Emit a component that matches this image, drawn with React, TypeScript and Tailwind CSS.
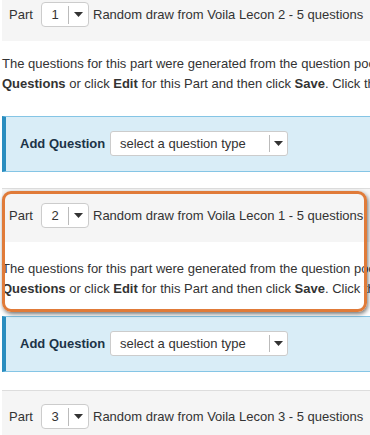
const Caret = () => (
  <svg width="9" height="5" viewBox="0 0 9 5" className="block">
    <path d="M0 0 H9 L4.5 5 Z" fill="#333" />
  </svg>
);

const PartSelect = ({ value }: { value: string }) => (
  <div className="flex h-[25px] w-[48px] shrink-0 items-center rounded-[4px] border border-[#cccccc] bg-white">
    <span className="w-[26px] text-center text-[13px] text-[#333]">{value}</span>
    <span className="h-[18px] w-px bg-[#bbbbbb]" />
    <span className="flex flex-1 justify-center">
      <Caret />
    </span>
  </div>
);

const PartHeader = ({
  num,
  lesson,
  className,
}: {
  num: string;
  lesson: string;
  className: string;
}) => (
  <div className={`flex items-center bg-[#f5f5f5] pl-[7px] pb-[14px] ${className}`}>
    <span className="w-[32px] text-[13px] text-[#333]">Part</span>
    <PartSelect value={num} />
    <span className="ml-[4px] whitespace-nowrap text-[13px] text-[#333]">
      Random draw from Voila Lecon {lesson} - 5 questions
    </span>
  </div>
);

const PartText = ({ className }: { className: string }) => (
  <div className={`text-[13px] leading-[20px] text-[#333] ${className}`}>
    <p className="whitespace-nowrap">
      The questions for this part were generated from the question pool. To change which questions are used, click Regenerate
    </p>
    <p className="whitespace-nowrap">
      <b>Questions</b> or click <b>Edit</b> for this Part and then click <b>Save</b>. Click the question to edit it.
    </p>
  </div>
);

const AddQuestion = ({ className }: { className: string }) => (
  <div
    className={`flex items-center border-y border-[#85c5e5] border-l-4 border-l-[#2a8dbf] bg-[#d9edf7] pl-[14px] pt-[14px] pb-[15px] ${className}`}
  >
    <span className="w-[90px] text-[13px] font-bold text-[#1c3347]">Add Question</span>
    <div className="flex h-[25px] w-[178px] items-center rounded-[3px] border border-[#cccccc] bg-white">
      <span className="flex-1 pl-[9px] text-[13px] text-[#333]">select a question type</span>
      <span className="h-[17px] w-px bg-[#bbbbbb]" />
      <span className="flex w-[17px] justify-center">
        <Caret />
      </span>
    </div>
  </div>
);

export default function App() {
  return (
    <div
      className="h-[435px] w-[370px] overflow-hidden bg-white pl-[2px]"
      style={{ fontFamily: '"Liberation Sans", Arial, sans-serif' }}
    >
      <div className="w-[640px]">
        <PartHeader num="1" lesson="2" className="-mt-[13px] pt-[15px]" />
        <PartText className="mt-[13px]" />
        <AddQuestion className="mt-[22px]" />

        <div className="relative mt-[16px]">
          <PartHeader num="2" lesson="1" className="border-t border-[#dddddd] pt-[14px]" />
          <PartText className="mt-[17px]" />
          <div className="pointer-events-none absolute left-0 top-[3px] h-[121px] w-[365px] rounded-[9px] border-[3px] border-[#e07b39] shadow-[1px_2px_4px_rgba(0,0,0,0.55)]" />
        </div>

        <AddQuestion className="mt-[17px]" />
        <PartHeader num="3" lesson="3" className="mt-[18px] border-t border-[#dddddd] pt-[13px]" />
      </div>
    </div>
  );
}
